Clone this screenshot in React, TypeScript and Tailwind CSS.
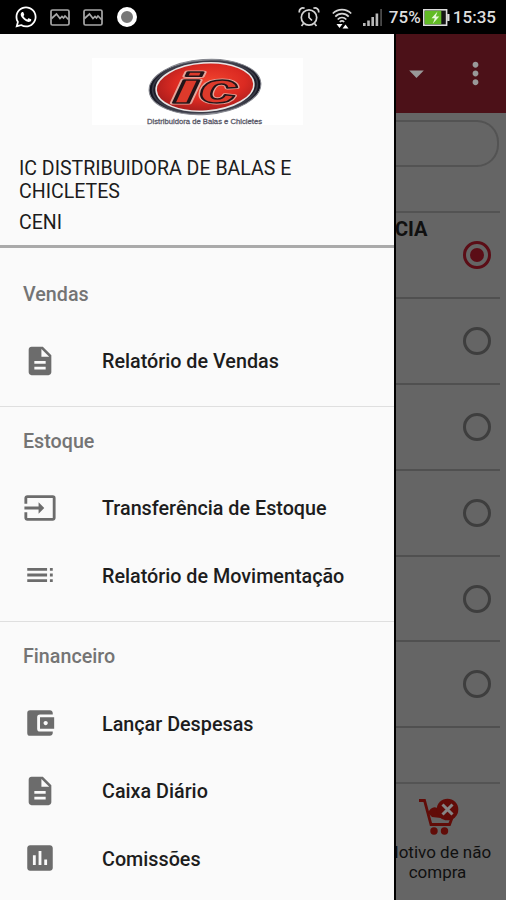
import type { ReactNode } from "react";
import type { IconType } from "react-icons";
import { FaWhatsapp } from "react-icons/fa";
import {
  MdAccountBalanceWallet,
  MdArrowDropDown,
  MdDescription,
  MdInput,
  MdInsertChart,
  MdMoreVert,
  MdToc,
} from "react-icons/md";

type MenuItem = { label: string; icon: IconType };
type MenuSection = { title: string; items: MenuItem[] };

const sections: MenuSection[] = [
  { title: "Vendas", items: [{ label: "Relatório de Vendas", icon: MdDescription }] },
  {
    title: "Estoque",
    items: [
      { label: "Transferência de Estoque", icon: MdInput },
      { label: "Relatório de Movimentação", icon: MdToc },
    ],
  },
  {
    title: "Financeiro",
    items: [
      { label: "Lançar Despesas", icon: MdAccountBalanceWallet },
      { label: "Caixa Diário", icon: MdDescription },
      { label: "Comissões", icon: MdInsertChart },
    ],
  },
];

function PictureIcon() {
  return (
    <svg width="20" height="17" viewBox="0 0 20 17" fill="none" stroke="#a8a8a8" strokeWidth="1.7">
      <rect x="1" y="1" width="18" height="15" rx="1.5" />
      <path d="M1.5 9.5 6.5 5l3.5 4.5 2-2 1.5 1.5L15 7l3.5 3.5" />
    </svg>
  );
}

function AlarmIcon() {
  return (
    <svg width="22" height="22" viewBox="0 0 22 22" fill="none" stroke="#d4d4d4" strokeWidth="1.7">
      <circle cx="11" cy="11.5" r="7.7" />
      <path d="M11 6.5v5l3 3M5.5 17.5 3.5 20M16.5 17.5l2 2.5" />
      <path d="M1.5 6.5C.5 3.5 4 .8 6.6 2.4M20.5 6.5c1-3-2.5-5.7-5.1-4.1" />
    </svg>
  );
}

function WifiIcon() {
  return (
    <svg width="20" height="22" viewBox="0 0 20 22" fill="none" stroke="#d4d4d4" strokeWidth="1.7">
      <path d="M.8 5.5C6 .3 14 .3 19.2 5.5M3.3 8.6c3.7-4 9.7-4 13.4 0M5.7 11.5c2.4-2.7 6.2-2.7 8.6 0M7.8 14c1.3-1.3 3.1-1.3 4.4 0" />
      <path d="M4.5 16h6l-3 4zM10.5 20.5h6l-3-4z" fill="#fff" stroke="none" />
    </svg>
  );
}

function SignalIcon() {
  return (
    <svg width="20" height="18" viewBox="0 0 20 18" fill="#b9b9b9">
      <rect x="0" y="14" width="2.6" height="3" />
      <rect x="4.2" y="11.5" width="2.6" height="5.5" />
      <rect x="8.4" y="8" width="2.6" height="9" />
      <rect x="12.6" y="4.5" width="2.6" height="12.5" />
      <rect x="17.2" y="0" width="1.8" height="17" fill="#4a4a4a" />
    </svg>
  );
}

function BatteryIcon() {
  return (
    <svg width="27" height="17" viewBox="0 0 27 17">
      <rect x=".8" y=".8" width="22.8" height="15.4" fill="#151515" stroke="#dcdcdc" strokeWidth="1.6" />
      <rect x="1.8" y="1.8" width="16.5" height="13.4" fill="#62bb25" />
      <rect x="24.2" y="5" width="2.3" height="7" fill="#dcdcdc" />
      <path d="M14.5 2.5 8.5 9.3h3.3l-2 5.4 6.4-7.2h-3.4z" fill="#e9f7dc" />
    </svg>
  );
}

function StatusBar() {
  return (
    <header className="flex h-[34px] shrink-0 items-center bg-black pl-[14px] pr-[10px] text-[17px] font-medium text-[#dedede]">
      <FaWhatsapp className="size-6 text-white" />
      <div className="ml-3 flex items-center gap-[13px]">
        <PictureIcon />
        <PictureIcon />
      </div>
      <span className="ml-[14px] size-5 rounded-full border-4 border-white bg-[#777]" />
      <div className="ml-auto flex items-center">
        <AlarmIcon />
        <span className="ml-3 mt-1">
          <WifiIcon />
        </span>
        <span className="ml-[11px] mt-px">
          <SignalIcon />
        </span>
        <span className="ml-[6px] w-[34px] pt-0.5">75%</span>
        <BatteryIcon />
        <span className="ml-[3px] pt-0.5">15:35</span>
      </div>
    </header>
  );
}

function LogoLetters() {
  return (
    <>
      <text x="80" y="45" textLength="29" lengthAdjust="spacingAndGlyphs">
        i
      </text>
      <text x="107" y="45" textLength="39" lengthAdjust="spacingAndGlyphs">
        c
      </text>
    </>
  );
}

function Logo() {
  return (
    <svg width="211" height="67" viewBox="0 0 211 67" className="bg-white">
      <defs>
        <radialGradient id="logo-red" cx="55%" cy="42%" r="60%">
          <stop offset="0" stopColor="#f2452f" />
          <stop offset=".6" stopColor="#db2a22" />
          <stop offset="1" stopColor="#a91d1c" />
        </radialGradient>
        <linearGradient id="logo-rim" x1="0" x2="1">
          <stop offset="0" stopColor="#10101c" />
          <stop offset=".5" stopColor="#8b8d96" />
          <stop offset="1" stopColor="#10101c" />
        </linearGradient>
      </defs>
      <g transform="rotate(-4 113 29)">
        <ellipse cx="113" cy="29" rx="56" ry="27.5" fill="url(#logo-rim)" stroke="#85878f" strokeWidth="1" />
        <ellipse cx="113" cy="29" rx="52.5" ry="25.5" fill="none" stroke="#3b3c48" strokeWidth="1.5" />
        <ellipse cx="113" cy="29" rx="49" ry="24" fill="url(#logo-red)" stroke="#e8e4e4" strokeWidth="1.5" />
      </g>
      <g
        fontFamily="'Liberation Sans', Arial, sans-serif"
        fontWeight="700"
        fontStyle="italic"
        fontSize="42"
        strokeLinejoin="round"
      >
        <g fill="none" stroke="#e6a59a" strokeWidth="3.2">
          <LogoLetters />
        </g>
        <g fill="#dd3a2b" stroke="#221418" strokeWidth="1.5">
          <LogoLetters />
        </g>
      </g>
      <text
        x="55"
        y="65.5"
        textLength="115"
        lengthAdjust="spacingAndGlyphs"
        fill="#5a5a6a"
        stroke="#5a5a6a"
        strokeWidth=".3"
        fontFamily="'Liberation Sans', Arial, sans-serif"
        fontSize="7.5"
      >
        Distribuidora de Balas e Chicletes
      </text>
    </svg>
  );
}

/** Navigation drawer that slides in over the customer list. */
function Drawer() {
  return (
    <aside className="absolute inset-y-0 left-0 w-[396px] overflow-hidden border-r-2 border-black bg-[#fafafa]">
      <div className="h-[214px] border-b-3 border-[#aaa] pt-6 text-[19.55px] leading-[23px] text-[#1c1c1c]">
        <div className="pl-[92px]">
          <Logo />
        </div>
        <p className="mt-8 w-[300px] pl-[19px]">IC DISTRIBUIDORA DE BALAS E CHICLETES</p>
        <p className="mt-2 pl-[19px]">CENI</p>
      </div>
      <nav className="pt-[11.5px]">
        {sections.map((section, i) => (
          <section key={section.title} className={i > 0 ? "border-t border-[#dfdfdf] pb-3" : "pb-[11px]"}>
            <h2 className="flex h-[67.5px] items-center pl-[23px] pt-[3px] text-[19.7px] font-medium text-[#747474]">
              {section.title}
            </h2>
            {section.items.map(({ label, icon: Icon }) => (
              <a key={label} className="flex h-[67.5px] items-center pl-[23px] text-[19.75px] font-medium text-[#1d1d1d]">
                <Icon className="mr-[45px] size-[34px] text-[#6c6c6c]" />
                <span className="pt-[3px]">{label}</span>
              </a>
            ))}
          </section>
        ))}
      </nav>
    </aside>
  );
}

function CartRemoveIcon() {
  return (
    <svg width="40" height="37" viewBox="0 0 40 37" fill="none" stroke="#610c08" strokeWidth="2.8">
      <path d="M0 2.5h5.5L12 26.5h18.5L33 20" />
      <path d="M9 15c2-5 6-7 9-5l4 5 9 6-18-2z" fill="#610c08" stroke="none" />
      <circle cx="15" cy="33" r="3.7" fill="#610c08" stroke="none" />
      <circle cx="25.5" cy="33" r="3.7" fill="#610c08" stroke="none" />
      <circle cx="28.5" cy="11.5" r="10.8" fill="#610c08" stroke="none" />
      <path d="m23.5 6.5 10 10m0-10-10 10" stroke="#858585" strokeWidth="3" />
    </svg>
  );
}

function CustomerRow({ selected, children }: { selected?: boolean; children?: ReactNode }) {
  return (
    <li className="flex h-[85.9px] justify-between border-b-2 border-[#505050] pr-[9px]">
      <span className="pt-px text-[20px] font-bold text-[#101010]">{children}</span>
      <span
        className={
          selected
            ? "mt-7 flex size-7 items-center justify-center rounded-full border-3 border-[#5b0d16]"
            : "mt-7 size-7 rounded-full border-3 border-[#3e3e3e]"
        }
      >
        {selected && <span className="size-[14px] rounded-full bg-[#5b0d16]" />}
      </span>
    </li>
  );
}

/** Customer list, already darkened by the drawer scrim. */
function CustomerPage() {
  return (
    <main className="flex h-full flex-col bg-[#656565] pl-[395px]">
      <div className="flex h-[79px] shrink-0 items-center justify-between bg-[#4c1118] pl-1 pr-[13px] text-[#999]">
        <MdArrowDropDown className="size-[35px]" />
        <MdMoreVert className="size-[35px]" />
      </div>
      <div className="mt-[7px] h-[47px] w-[104px] shrink-0 rounded-r-[22px] border-2 border-l-0 border-[#535353]" />
      <ul className="mt-[44px] mr-[6px] shrink-0 border-t-2 border-[#535353]">
        <CustomerRow selected>CIA</CustomerRow>
        {[1, 2, 3, 4, 5].map((n) => (
          <CustomerRow key={n} />
        ))}
      </ul>
      <footer className="mr-[6px] mt-[54px] flex flex-1 flex-col items-center border-t-2 border-[#545454] pt-[14px]">
        <div className="pr-[18px]">
          <CartRemoveIcon />
        </div>
        <p className="-ml-5 mt-[7px] w-[124px] text-center text-[17px] leading-[20px] text-[#101010]">
          Motivo de não
          <br />
          compra
        </p>
      </footer>
    </main>
  );
}

export default function App() {
  return (
    <div className="flex h-[900px] w-[506px] flex-col overflow-hidden font-[Roboto,sans-serif]">
      <StatusBar />
      <div className="relative min-h-0 flex-1">
        <CustomerPage />
        <Drawer />
      </div>
    </div>
  );
}
